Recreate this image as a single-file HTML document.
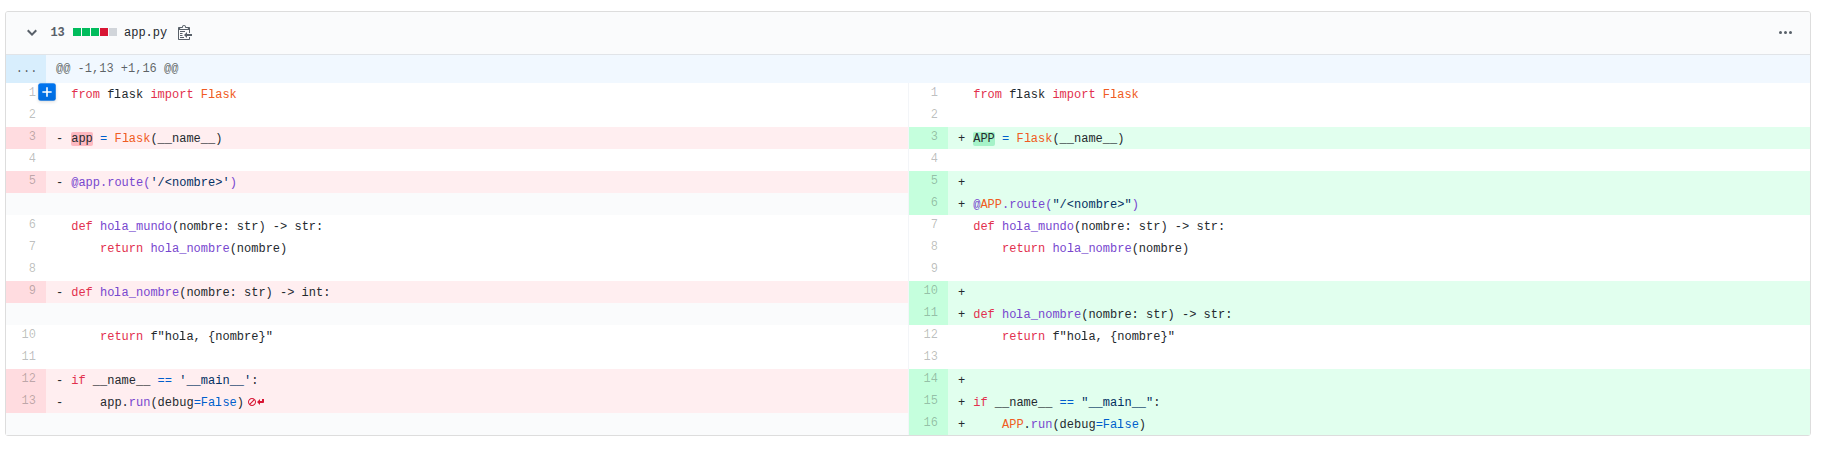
<!DOCTYPE html>
<html><head><meta charset="utf-8">
<style>
*{box-sizing:border-box}
html,body{margin:0;padding:0;background:#fff}
body{width:1826px;height:453px;overflow:hidden;position:relative;font-family:"Liberation Mono",monospace;font-size:12px;color:#24292e}
.file{position:absolute;left:5px;top:11px;width:1806px;height:425px;border:1px solid #ddd;border-radius:3px;background:#fff}
.hdr{position:relative;height:43px;background:#fafbfc;border-bottom:1px solid #e1e4e8;border-radius:2px 2px 0 0}
.hdr svg{position:absolute;fill:#586069}
.hdr span{position:absolute;line-height:20px;white-space:pre}
.blk{position:absolute;top:16px;width:8px;height:8px}
table{border-collapse:separate;border-spacing:0;table-layout:fixed;width:1804px}
td{padding:0;height:22px;line-height:20px;white-space:pre;vertical-align:top;overflow:visible}
td.n{width:40px;text-align:right;padding-right:10px;color:rgba(27,31,35,.3)}
td.c{padding:2px 0 0 25.2px;color:#24292e;position:relative}
td.c m{position:absolute;left:10px;top:2px}
tr.h td{height:28px;line-height:28px;background:#f1f8ff;color:rgba(27,31,35,.7);padding-top:0}
tr.h td.c{padding-left:10px}
tr.h td.n{background:#d8eefd;color:rgba(27,31,35,.7);text-align:right;padding-right:8.6px}
td.c.d{background:#ffeef0}td.n.d{background:#ffdce0}
td.c.a{background:#e1ffee}td.n.a{background:#c5ffdd}
td.e{background:#fafbfc}
tr:not(.h) td:nth-child(3){border-left:1px solid #f3f5f8}
.l{vertical-align:baseline;fill:currentColor;overflow:visible}
.x{background:#fdb8c0;border-radius:2px}
.y{background:#a5f3c8;border-radius:2px}
.k{color:#e2304e}.v{color:#f05c22}.f{color:#7847cf}.b{color:#005fcc}.s{color:#032f62}
.btn{position:absolute;left:30px;top:69px;width:22px;height:22px;background:#0366d6;background-image:linear-gradient(#0075f0,#006bdd);border-radius:3px;box-shadow:0 1px 4px rgba(27,31,35,.15);transform:scale(.8);transform-origin:50% 50%}
.btn svg{position:absolute;left:5px;top:3px;fill:#fff}
</style></head><body>
<div class="file">
<div class="hdr">
<svg style="left:21px;top:13px" width="10" height="16" viewBox="0 0 10 16"><path fill-rule="evenodd" d="M5 11L0 6l1.5-1.5L5 8.25 8.5 4.5 10 6l-5 5z"/></svg>
<span style="left:44.4px;top:11px;font-weight:bold;color:#586069">13</span>
<i class="blk" style="left:67px;background:#00bc5c"></i><i class="blk" style="left:76px;background:#00bc5c"></i><i class="blk" style="left:85px;background:#00bc5c"></i><i class="blk" style="left:94px;background:#d81534"></i><i class="blk" style="left:103px;background:#d1d5da"></i>
<span style="left:118px;top:11px">app.py</span>
<svg style="left:172px;top:12px" width="14" height="16" viewBox="0 0 14 16"><path fill-rule="evenodd" d="M2 13h4v1H2v-1zm5-6H2v1h5V7zm2 3V8l-3 3 3 3v-2h5v-2H9zM4.5 9H2v1h2.5V9zM2 12h2.5v-1H2v1zm9 1h1v2c-.02.28-.11.52-.3.7-.19.18-.42.28-.7.3H1c-.55 0-1-.45-1-1V4c0-.55.45-1 1-1h3c0-1.11.89-2 2-2 1.11 0 2 .89 2 2h3c.55 0 1 .45 1 1v5h-1V6H1v9h10v-2zM2 5h8c0-.55-.45-1-1-1H8c-.55 0-1-.45-1-1s-.45-1-1-1-1 .45-1 1-.45 1-1 1H3c-.55 0-1 .45-1 1z"/></svg>
<svg style="left:1773px;top:13px" width="13" height="16" viewBox="0 0 13 16"><path fill-rule="evenodd" d="M1.5 9a1.5 1.5 0 100-3 1.5 1.5 0 000 3zm5 0a1.5 1.5 0 100-3 1.5 1.5 0 000 3zM13 7.5a1.5 1.5 0 11-3 0 1.5 1.5 0 013 0z"/></svg>
</div>
<table>
<colgroup><col style="width:40px"><col style="width:862px"><col style="width:40px"><col style="width:862px"></colgroup>
<tr class="h"><td class="n">...</td><td class="c" colspan="3">@@ -1,13 +1,16 @@</td></tr>
<tr><td class="n">1</td><td class="c"><span class="k">from</span> f<svg class="l" width="7.2" height="9" viewBox="0 0 7.2 9"><path d="M1.5 .05H4.4V8.1H6.4V8.95H.7V8.1H3.2V.9H1.5z"/></svg>ask <span class="k">import</span> <span class="v">F<svg class="l" width="7.2" height="9" viewBox="0 0 7.2 9"><path d="M1.5 .05H4.4V8.1H6.4V8.95H.7V8.1H3.2V.9H1.5z"/></svg>ask</span></td><td class="n">1</td><td class="c"><span class="k">from</span> f<svg class="l" width="7.2" height="9" viewBox="0 0 7.2 9"><path d="M1.5 .05H4.4V8.1H6.4V8.95H.7V8.1H3.2V.9H1.5z"/></svg>ask <span class="k">import</span> <span class="v">F<svg class="l" width="7.2" height="9" viewBox="0 0 7.2 9"><path d="M1.5 .05H4.4V8.1H6.4V8.95H.7V8.1H3.2V.9H1.5z"/></svg>ask</span></td></tr>
<tr><td class="n">2</td><td class="c"></td><td class="n">2</td><td class="c"></td></tr>
<tr><td class="n d">3</td><td class="c d"><m>-</m><span class="x">app</span> <span class="b">=</span> <span class="v">F<svg class="l" width="7.2" height="9" viewBox="0 0 7.2 9"><path d="M1.5 .05H4.4V8.1H6.4V8.95H.7V8.1H3.2V.9H1.5z"/></svg>ask</span>(__name__)</td><td class="n a">3</td><td class="c a"><m>+</m><span class="y">APP</span> <span class="b">=</span> <span class="v">F<svg class="l" width="7.2" height="9" viewBox="0 0 7.2 9"><path d="M1.5 .05H4.4V8.1H6.4V8.95H.7V8.1H3.2V.9H1.5z"/></svg>ask</span>(__name__)</td></tr>
<tr><td class="n">4</td><td class="c"></td><td class="n">4</td><td class="c"></td></tr>
<tr><td class="n d">5</td><td class="c d"><m>-</m><span class="f">@app.route(</span><span class="s">'/&lt;nombre&gt;'</span><span class="f">)</span></td><td class="n a">5</td><td class="c a"><m>+</m></td></tr>
<tr><td class="n e"></td><td class="c e"></td><td class="n a">6</td><td class="c a"><m>+</m><span class="f">@<span class="v">APP</span>.route(</span><span class="s">"/&lt;nombre&gt;"</span><span class="f">)</span></td></tr>
<tr><td class="n">6</td><td class="c"><span class="k">def</span> <span class="f">ho<svg class="l" width="7.2" height="9" viewBox="0 0 7.2 9"><path d="M1.5 .05H4.4V8.1H6.4V8.95H.7V8.1H3.2V.9H1.5z"/></svg>a_mundo</span>(nombre: str) -&gt; str:</td><td class="n">7</td><td class="c"><span class="k">def</span> <span class="f">ho<svg class="l" width="7.2" height="9" viewBox="0 0 7.2 9"><path d="M1.5 .05H4.4V8.1H6.4V8.95H.7V8.1H3.2V.9H1.5z"/></svg>a_mundo</span>(nombre: str) -&gt; str:</td></tr>
<tr><td class="n">7</td><td class="c">    <span class="k">return</span> <span class="f">ho<svg class="l" width="7.2" height="9" viewBox="0 0 7.2 9"><path d="M1.5 .05H4.4V8.1H6.4V8.95H.7V8.1H3.2V.9H1.5z"/></svg>a_nombre</span>(nombre)</td><td class="n">8</td><td class="c">    <span class="k">return</span> <span class="f">ho<svg class="l" width="7.2" height="9" viewBox="0 0 7.2 9"><path d="M1.5 .05H4.4V8.1H6.4V8.95H.7V8.1H3.2V.9H1.5z"/></svg>a_nombre</span>(nombre)</td></tr>
<tr><td class="n">8</td><td class="c"></td><td class="n">9</td><td class="c"></td></tr>
<tr><td class="n d">9</td><td class="c d"><m>-</m><span class="k">def</span> <span class="f">ho<svg class="l" width="7.2" height="9" viewBox="0 0 7.2 9"><path d="M1.5 .05H4.4V8.1H6.4V8.95H.7V8.1H3.2V.9H1.5z"/></svg>a_nombre</span>(nombre: str) -&gt; int:</td><td class="n a">10</td><td class="c a"><m>+</m></td></tr>
<tr><td class="n e"></td><td class="c e"></td><td class="n a">11</td><td class="c a"><m>+</m><span class="k">def</span> <span class="f">ho<svg class="l" width="7.2" height="9" viewBox="0 0 7.2 9"><path d="M1.5 .05H4.4V8.1H6.4V8.95H.7V8.1H3.2V.9H1.5z"/></svg>a_nombre</span>(nombre: str) -&gt; str:</td></tr>
<tr><td class="n">10</td><td class="c">    <span class="k">return</span> f"ho<svg class="l" width="7.2" height="9" viewBox="0 0 7.2 9"><path d="M1.5 .05H4.4V8.1H6.4V8.95H.7V8.1H3.2V.9H1.5z"/></svg>a, {nombre}"</td><td class="n">12</td><td class="c">    <span class="k">return</span> f"ho<svg class="l" width="7.2" height="9" viewBox="0 0 7.2 9"><path d="M1.5 .05H4.4V8.1H6.4V8.95H.7V8.1H3.2V.9H1.5z"/></svg>a, {nombre}"</td></tr>
<tr><td class="n">11</td><td class="c"></td><td class="n">13</td><td class="c"></td></tr>
<tr><td class="n d">12</td><td class="c d"><m>-</m><span class="k">if</span> __name__ <span class="b">==</span> <span class="s">'__main__'</span>:</td><td class="n a">14</td><td class="c a"><m>+</m></td></tr>
<tr><td class="n d">13</td><td class="c d"><m>-</m>    app.<span class="f">run</span>(debug<span class="b">=Fa<svg class="l" width="7.2" height="9" viewBox="0 0 7.2 9"><path d="M1.5 .05H4.4V8.1H6.4V8.95H.7V8.1H3.2V.9H1.5z"/></svg>se</span>)<svg style="position:absolute;left:202px;top:3px;fill:#d81534" width="16" height="16" viewBox="0 0 16 16"><path fill-rule="evenodd" d="M16 5v3c0 .55-.45 1-1 1h-3v2L9 8l3-3v2h2V5h2zM8 8c0 2.2-1.8 4-4 4s-4-1.8-4-4 1.8-4 4-4 4 1.8 4 4zM1.5 9.66L5.66 5.5C5.18 5.19 4.61 5 4 5 2.34 5 1 6.34 1 8c0 .61.19 1.17.5 1.66zM7 8c0-.61-.19-1.17-.5-1.66L2.34 10.5c.48.31 1.05.5 1.66.5 1.66 0 3-1.34 3-3z"/></svg></td><td class="n a">15</td><td class="c a"><m>+</m><span class="k">if</span> __name__ <span class="b">==</span> <span class="s">"__main__"</span>:</td></tr>
<tr><td class="n e"></td><td class="c e"></td><td class="n a">16</td><td class="c a"><m>+</m>    <span class="v">APP</span>.<span class="f">run</span>(debug<span class="b">=Fa<svg class="l" width="7.2" height="9" viewBox="0 0 7.2 9"><path d="M1.5 .05H4.4V8.1H6.4V8.95H.7V8.1H3.2V.9H1.5z"/></svg>se</span>)</td></tr>
</table>
<div class="btn"><svg width="12" height="16" viewBox="0 0 12 16"><path fill-rule="evenodd" d="M12 9H7v5H5V9H0V7h5V2h2v5h5v2z"/></svg></div>
</div>
</body></html>
